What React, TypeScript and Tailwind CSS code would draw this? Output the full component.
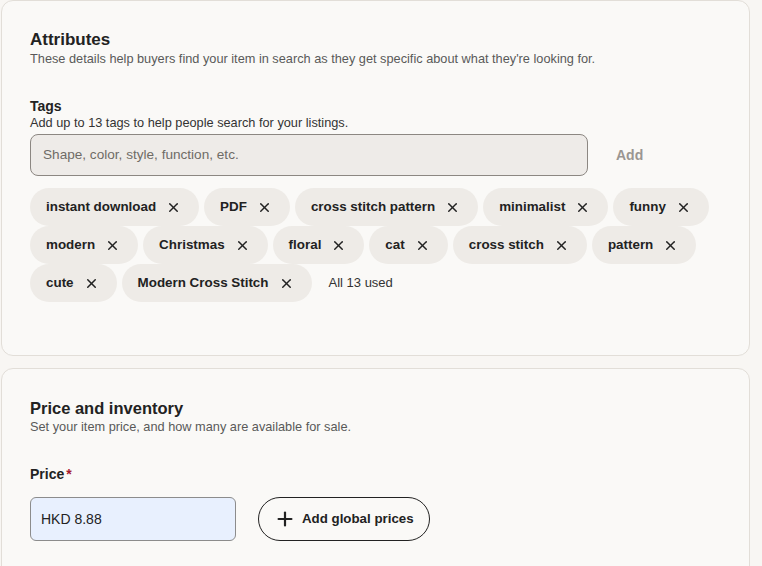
import { X, Plus } from "lucide-react";

const tags = [
  "instant download",
  "PDF",
  "cross stitch pattern",
  "minimalist",
  "funny",
  "modern",
  "Christmas",
  "floral",
  "cat",
  "cross stitch",
  "pattern",
  "cute",
  "Modern Cross Stitch",
];

function Tag({ label }: { label: string }) {
  return (
    <div className="flex h-[38px] items-center gap-[10px] rounded-full bg-[#eeebe7] pl-4 pr-[18px]">
      <span className="text-[13.4px] font-bold text-[#222]">{label}</span>
      <X className="h-[15px] w-[15px] text-[#222]" strokeWidth={2.4} />
    </div>
  );
}

export default function App() {
  return (
    <div
      className="min-h-[566px] bg-[#f8f6f3] pl-px pr-3 text-[#222]"
      style={{ fontFamily: "'Liberation Sans', Arial, sans-serif" }}
    >
      <section className="h-[356px] rounded-[12px] border border-[#e2ded8] bg-[#faf9f7] px-7 pt-[28px]">
        <h2 className="text-[17px] font-bold leading-[22px]">Attributes</h2>
        <p className="text-[12.75px] leading-[16px] text-[#595959]">
          These details help buyers find your item in search as they get specific about what they're looking for.
        </p>

        <div className="mt-[31px]">
          <h3 className="text-[14px] font-bold leading-[17px]">Tags</h3>
          <p className="text-[12.75px] leading-[16px] text-[#333]">
            Add up to 13 tags to help people search for your listings.
          </p>

          <div className="mt-[3px] flex items-center">
            <div className="flex h-[42px] w-[558px] items-center rounded-[8px] border border-[#8c8782] bg-[#eeebe8] px-3">
              <span className="text-[13.6px] text-[#6f6b66]">Shape, color, style, function, etc.</span>
            </div>
            <button className="ml-7 text-[14px] font-bold text-[#9a9692]">Add</button>
          </div>

          <div className="mt-3 flex flex-wrap items-center gap-x-[5px]">
            {tags.map((t) => (
              <Tag key={t} label={t} />
            ))}
            <span className="ml-3 text-[13px] text-[#333]">All 13 used</span>
          </div>
        </div>
      </section>

      <section className="mt-3 h-[220px] rounded-[12px] border border-[#e2ded8] bg-[#faf9f7] px-7 pt-[28px]">
        <h2 className="text-[16.5px] font-bold leading-[22px]">Price and inventory</h2>
        <p className="text-[12.75px] leading-[16px] text-[#595959]">
          Set your item price, and how many are available for sale.
        </p>

        <div className="mt-[30px] flex items-center text-[14px] font-bold leading-[18px]">
          Price<span className="ml-[2px] text-[#a61a2e]">*</span>
        </div>

        <div className="mt-[14px] flex items-center gap-[22px]">
          <div className="flex h-[44px] w-[206px] items-center rounded-[6px] border border-[#8c8c8c] bg-[#e8f0fe] px-[10px]">
            <span className="text-[14px] text-[#222]">HKD 8.88</span>
          </div>
          <button className="flex h-[44px] items-center gap-[6px] rounded-full border-[1.5px] border-[#222] px-[15px]">
            <Plus className="h-[22px] w-[22px]" strokeWidth={2.4} />
            <span className="text-[13.3px] font-bold">Add global prices</span>
          </button>
        </div>
      </section>
    </div>
  );
}
